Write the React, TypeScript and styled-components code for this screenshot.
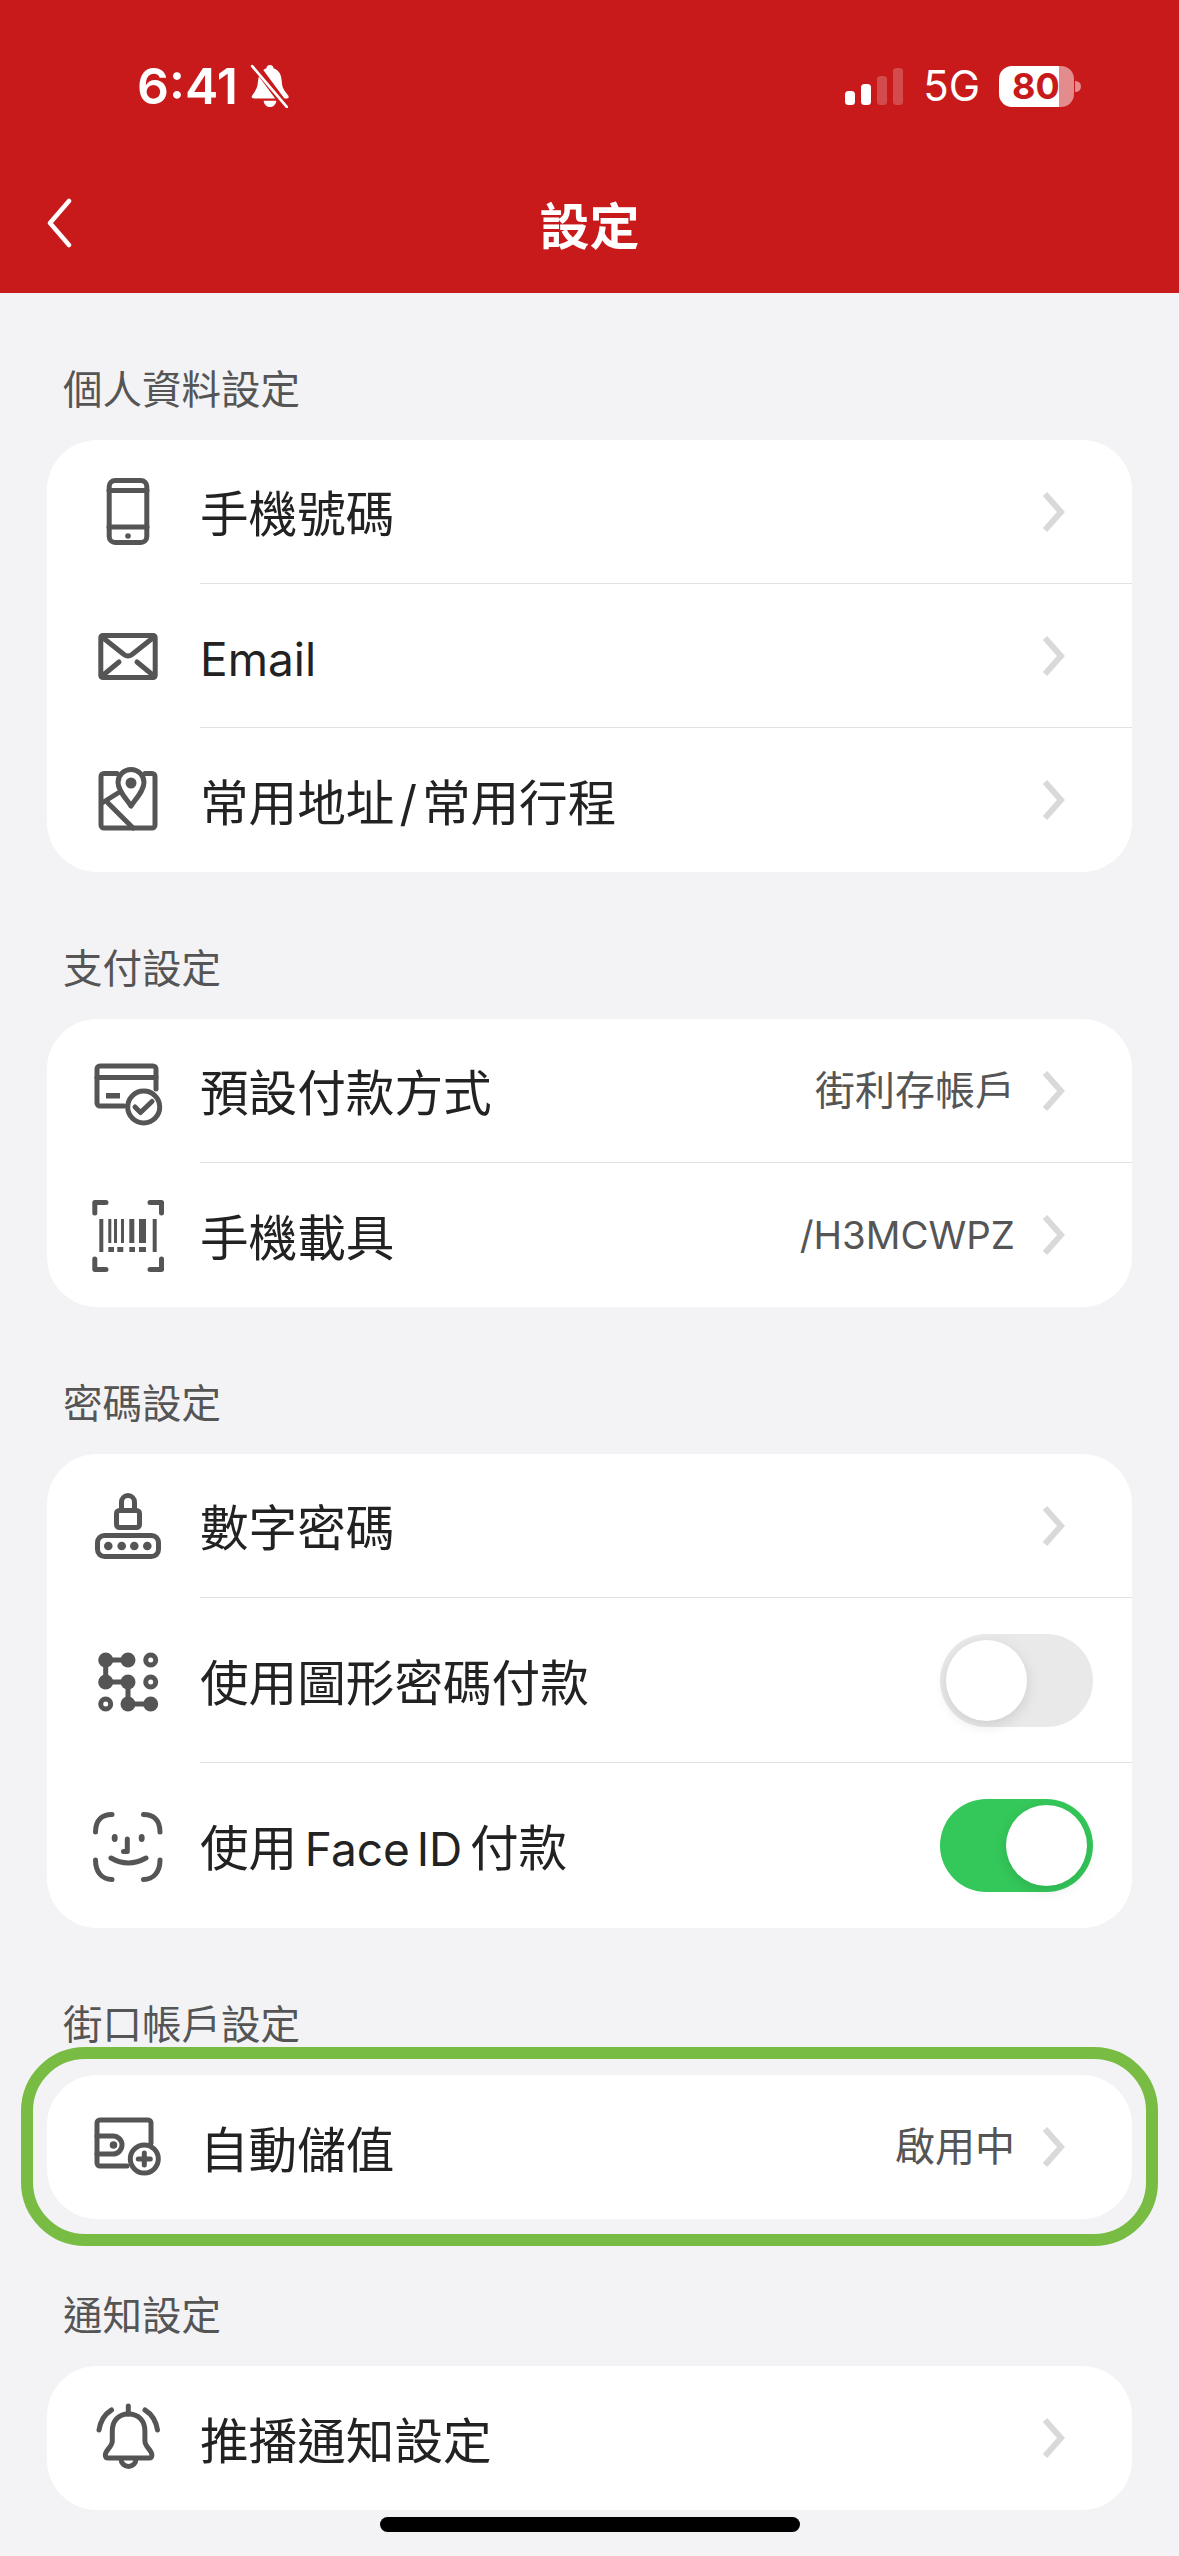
import React from 'react';
import styled, { createGlobalStyle } from 'styled-components';

const GlobalStyle = createGlobalStyle`
  html, body { margin: 0; padding: 0; background: #f3f3f6; }
  * { box-sizing: border-box; }
  body { font-family: Inter, "Noto Sans CJK TC", "Noto Sans", sans-serif; }
`;

const Page = styled.div`
  width: 1179px;
  min-height: 2556px;
  background: #f3f3f6;
  display: flex;
  flex-direction: column;
`;

const Header = styled.header`
  height: 293px;
  background: #c8191b;
  color: #fff;
  display: flex;
  flex-direction: column;
`;

const StatusBar = styled.div`
  height: 172px;
  padding: 0 98px 0 137px;
  display: flex;
  align-items: center;
  justify-content: space-between;
`;

const StatusLeft = styled.div`
  display: flex;
  align-items: center;
  gap: 12px;
`;

const Time = styled.span`
  font-family: Inter, sans-serif;
  font-size: 50px;
  font-weight: 600;
  line-height: 60px;
`;

const StatusRight = styled.div`
  display: flex;
  align-items: center;
`;

const Network = styled.span`
  font-family: Inter, sans-serif;
  font-size: 42px;
  font-weight: 400;
  line-height: 48px;
  margin: 0 19px 0 20px;
`;

const Battery = styled.div`
  width: 75px;
  height: 41px;
  border-radius: 13px;
  background: linear-gradient(90deg, #fff 0 80%, rgba(255, 255, 255, 0.5) 80% 100%);
  color: #c8191b;
  font-family: Inter, sans-serif;
  font-size: 36px;
  font-weight: 700;
  line-height: 41px;
  padding-left: 13px;
`;

const BatteryTip = styled.div`
  width: 6px;
  height: 11px;
  margin-left: 1px;
  border-radius: 0 6px 6px 0;
  background: rgba(255, 255, 255, 0.5);
`;

const NavBar = styled.nav`
  height: 108px;
  padding: 0 46px;
  display: grid;
  grid-template-columns: 1fr auto 1fr;
  align-items: center;
`;

const BackIcon = styled.svg`
  width: 26px;
  height: 50px;
  margin-top: -6px;
  display: block;
`;

const Title = styled.h1`
  margin: -7px 0 0;
  font-size: 50px;
  font-weight: 700;
  line-height: 60px;
  font-family: "Noto Sans CJK TC", sans-serif;
`;

const Main = styled.main`
  padding: 0 47px;
  display: flex;
  flex-direction: column;
`;

const Section = styled.section`
  padding-top: 69px;
`;

const SectionLabel = styled.h2`
  margin: 0 0 24px -1px;
  padding: 2px 0 0 17px;
  font-size: 39.5px;
  font-weight: 400;
  line-height: 52px;
  color: #555;
`;

const Highlight = styled.div`
  margin: -28px -26px -27px;
  padding: 16px 14px 15px;
  border: 12px solid #78bc43;
  border-radius: 64px;
`;

const Card = styled.div`
  background: #fff;
  border-radius: 50px;
  overflow: hidden;
`;

const Row = styled.div<{ $h: number }>`
  height: ${p => p.$h}px;
  padding-left: 41px;
  display: flex;
  align-items: stretch;
`;

const RowIcon = styled.svg`
  width: 80px;
  height: 80px;
  flex: none;
  align-self: center;
  margin-right: 32px;
  fill: none;
  stroke: #555;
  stroke-width: 5;
  stroke-linecap: round;
  stroke-linejoin: round;
`;

const RowBody = styled.div<{ $last?: boolean; $toggle?: boolean }>`
  flex: 1;
  min-width: 0;
  padding-right: ${p => (p.$toggle ? 39 : 67)}px;
  display: flex;
  align-items: center;
  border-bottom: ${p => (p.$last ? 'none' : '1px solid #e2e2e4')};
`;

const RowLabel = styled.span`
  flex: 1;
  margin-top: 7px;
  font-size: 48.6px;
  font-weight: 400;
  line-height: 60px;
  color: #222;
  word-spacing: -6px;
  white-space: nowrap;
`;

const Latin = styled.span<{ $size: number }>`
  font-size: ${p => p.$size}px;
`;

const Slash = styled.span`
  margin: 0 5px;
`;

const RowValue = styled.span`
  font-size: 40px;
  font-weight: 400;
  line-height: 50px;
  color: #555;
  margin-right: 26px;
`;

const Chevron = styled.svg`
  width: 24px;
  height: 42px;
  flex: none;
  fill: none;
  stroke: #d9d9d9;
  stroke-width: 6;
`;

const Toggle = styled.div<{ $on?: boolean }>`
  width: 153px;
  height: 93px;
  padding: 6px;
  border-radius: 47px;
  background: ${p => (p.$on ? '#34c85a' : '#e9e9ea')};
  display: flex;
  justify-content: ${p => (p.$on ? 'flex-end' : 'flex-start')};
`;

const Knob = styled.div`
  width: 81px;
  height: 81px;
  border-radius: 50%;
  background: #fff;
  box-shadow: 0 4px 14px rgba(0, 0, 0, 0.12);
`;

const HomeIndicator = styled.div`
  width: 420px;
  height: 15px;
  margin: 7px auto 24px;
  border-radius: 8px;
  background: #000;
`;

const Arrow = () => (
  <Chevron viewBox="0 0 24 42"><path d="M4 3 L20 21 L4 39" /></Chevron>
);

const MuteBell = () => (
  <svg width="41" height="44" viewBox="0 0 39 42">
    <path fill="#fff" d="M19 1c2 0 3 1 3.4 3 6 2 7.6 7 8 14 .3 5 2 7 6 12 1 2 .5 3-2 3H4c-2.500 0-3-1.500-2-3 3-4 5-7 5.400-12C8 11 10 6 15.600 4 16 2 17 1 19 1z" />
    <path fill="#fff" d="M13 35h12c0 3-2.500 6-6 6s-6-3-6-6z" />
    <path stroke="#c8191b" strokeWidth="7" d="M4 0 L35 42" />
    <path stroke="#fff" strokeWidth="2.600" strokeLinecap="round" d="M2 2 L35 41" />
  </svg>
);

const Signal = () => (
  <svg width="58" height="37" viewBox="0 0 58 37" fill="#fff">
    <rect x="0" y="23" width="10" height="14" rx="3.500" />
    <rect x="16" y="16" width="10" height="21" rx="3.500" />
    <rect x="32" y="8" width="10" height="29" rx="3.500" opacity="0.22" />
    <rect x="48" y="0" width="10" height="37" rx="3.500" opacity="0.22" />
  </svg>
);

const PhoneIcon = () => (
  <RowIcon viewBox="0 0 80 80">
    <rect x="21.200" y="8.500" width="37.600" height="62" rx="6" />
    <path d="M21 18.500H59M21 55H59" />
    <circle cx="40" cy="64" r="2.800" fill="#555" stroke="none" />
  </RowIcon>
);

const MailIcon = () => (
  <RowIcon viewBox="0 0 80 80">
    <rect x="12.800" y="19.500" width="54.400" height="42" rx="2" />
    <path d="M14 21 L36 38.500 q4 3 8 0 L66 21M14 60 L31 46M66 60 L49 46" />
  </RowIcon>
);

const MapIcon = () => (
  <RowIcon viewBox="0 0 80 80">
    <path d="M29 13.500H16a3 3 0 0 0-3 3V65a3 3 0 0 0 3 3H64a3 3 0 0 0 3-3V16.500a3 3 0 0 0-3-3H57" />
    <path d="M43 9.500a13 13 0 0 1 13 13c0 8-8 16-13 23.500c-5-7.500-13-15.500-13-23.500a13 13 0 0 1 13-13z" />
    <circle cx="43" cy="23" r="5.500" fill="#555" stroke="none" />
    <path d="M14 43 L30 33M20 43 L45 68" />
  </RowIcon>
);

const CardCheckIcon = () => (
  <RowIcon viewBox="0 0 80 80">
    <path d="M36 55H12a3 3 0 0 1-3-3V18a3 3 0 0 1 3-3H65a3 3 0 0 1 3 3V38" />
    <path d="M9 26.500H68" />
    <rect x="18" y="42" width="14" height="5.500" fill="#555" stroke="none" />
    <circle cx="55.700" cy="56" r="16" />
    <path d="M47 56 L52.500 61.500 L64 50.500" />
  </RowIcon>
);

const BarcodeIcon = () => (
  <RowIcon viewBox="0 0 80 80" strokeLinecap="butt">
    <path d="M18 7.500H6.800V18M62 7.500H73.500V18M18 74.500H6.800V64M62 74.500H73.500V64" />
    <g fill="#555" stroke="none">
      <rect x="11.300" y="24" width="4" height="33" />
      <rect x="20.300" y="24" width="3" height="24" />
      <rect x="26" y="24" width="3" height="24" />
      <rect x="33" y="24" width="3" height="24" />
      <rect x="41.300" y="24" width="5" height="24" />
      <rect x="51" y="24" width="7" height="24" />
      <rect x="64.700" y="24" width="4" height="33" />
      <rect x="20.300" y="52" width="5.700" height="5" />
      <rect x="29.300" y="52" width="6" height="5" />
      <rect x="41.300" y="52" width="5.700" height="5" />
      <rect x="51" y="52" width="7" height="5" />
    </g>
  </RowIcon>
);

const LockIcon = () => (
  <RowIcon viewBox="0 0 80 80">
    <rect x="9.500" y="49.500" width="61" height="21" rx="7" />
    <rect x="28.500" y="24.500" width="23" height="17" rx="3" />
    <path d="M33.500 24V16a6.500 6.500 0 0 1 13 0V24" />
    <g fill="#555" stroke="none">
      <circle cx="20.300" cy="60" r="4.300" />
      <circle cx="33.700" cy="60" r="4.300" />
      <circle cx="46.300" cy="60" r="4.300" />
      <circle cx="59.300" cy="60" r="4.300" />
    </g>
  </RowIcon>
);

const PatternIcon = () => (
  <RowIcon viewBox="0 0 80 80">
    <path d="M17.700 19H40M17.700 19V41H40V63H62.700" />
    <g fill="#555" stroke="none">
      <circle cx="17.700" cy="19" r="7.500" />
      <circle cx="40" cy="19" r="7.500" />
      <circle cx="17.700" cy="41" r="7.500" />
      <circle cx="40" cy="41" r="7.500" />
      <circle cx="40" cy="63" r="7.500" />
      <circle cx="62.700" cy="63" r="7.500" />
    </g>
    <circle cx="62.700" cy="19" r="5" />
    <circle cx="62.700" cy="41" r="5" />
    <circle cx="17.700" cy="63" r="5" />
  </RowIcon>
);

const FaceIcon = () => (
  <RowIcon viewBox="0 0 80 80">
    <path d="M7.500 26C7.500 14 14 8.500 24 8.500M72 26C72 14 65.500 8.500 55.500 8.500M7.500 54C7.500 66 14 73.500 24 73.500M72 54C72 66 65.500 73.500 55.500 73.500" />
    <ellipse cx="26.700" cy="32" rx="3" ry="4" fill="#555" stroke="none" />
    <ellipse cx="53.700" cy="32" rx="3" ry="4" fill="#555" stroke="none" />
    <path d="M39.300 33V45.500H35.500M23 52Q40 62 58 52" />
  </RowIcon>
);

const WalletIcon = () => (
  <RowIcon viewBox="0 0 80 80" strokeWidth="4.500">
    <path d="M39 59H12a3 3 0 0 1-3-3V16a3 3 0 0 1 3-3H60a3 3 0 0 1 3 3V36" />
    <path d="M9 29H25a9 9 0 0 1 0 18H9" />
    <circle cx="25.500" cy="38" r="3.800" fill="#555" stroke="none" />
    <circle cx="56.300" cy="52" r="14" />
    <path d="M50.300 52H62.300M56.300 46V58" />
  </RowIcon>
);

const BellIcon = () => (
  <RowIcon viewBox="0 0 80 80">
    <path d="M40.300 8V16" />
    <path d="M40.300 16c-10 0-16 7-16 17v10c0 6-7 9-7 14c0 2 1 3 3 3h40.600c2 0 3-1 3-3c0-5-7-8-7-14v-10c0-10-6-17-16.600-17z" />
    <path d="M33 61a7.500 7.500 0 0 0 15 0" />
    <path d="M11 32C12.500 23 17 16 23.500 12M69.500 32C68 23 63.500 16 57 12" />
  </RowIcon>
);

export default function App() {
  return (
    <Page>
      <GlobalStyle />
      <Header>
        <StatusBar>
          <StatusLeft>
            <Time>6:41</Time>
            <MuteBell />
          </StatusLeft>
          <StatusRight>
            <Signal />
            <Network>5G</Network>
            <Battery>80</Battery>
            <BatteryTip />
          </StatusRight>
        </StatusBar>
        <NavBar>
          <BackIcon viewBox="0 0 26 50" fill="none" stroke="#fff" strokeWidth="4.500" strokeLinecap="round" strokeLinejoin="round">
            <path d="M23 3 L4 25 L23 47" />
          </BackIcon>
          <Title>設定</Title>
        </NavBar>
      </Header>
      <Main>
        <Section>
          <SectionLabel>個人資料設定</SectionLabel>
          <Card>
            <Row $h={144}>
              <PhoneIcon />
              <RowBody><RowLabel>手機號碼</RowLabel><Arrow /></RowBody>
            </Row>
            <Row $h={144}>
              <MailIcon />
              <RowBody><RowLabel><Latin $size={46}>Email</Latin></RowLabel><Arrow /></RowBody>
            </Row>
            <Row $h={144}>
              <MapIcon />
              <RowBody $last><RowLabel>常用地址<Slash>/</Slash>常用行程</RowLabel><Arrow /></RowBody>
            </Row>
          </Card>
        </Section>
        <Section>
          <SectionLabel>支付設定</SectionLabel>
          <Card>
            <Row $h={144}>
              <CardCheckIcon />
              <RowBody><RowLabel>預設付款方式</RowLabel><RowValue>街利存帳戶</RowValue><Arrow /></RowBody>
            </Row>
            <Row $h={144}>
              <BarcodeIcon />
              <RowBody $last><RowLabel>手機載具</RowLabel><RowValue><Latin $size={38.4}>/H3MCWPZ</Latin></RowValue><Arrow /></RowBody>
            </Row>
          </Card>
        </Section>
        <Section>
          <SectionLabel>密碼設定</SectionLabel>
          <Card>
            <Row $h={144}>
              <LockIcon />
              <RowBody><RowLabel>數字密碼</RowLabel><Arrow /></RowBody>
            </Row>
            <Row $h={165}>
              <PatternIcon />
              <RowBody $toggle><RowLabel>使用圖形密碼付款</RowLabel><Toggle><Knob /></Toggle></RowBody>
            </Row>
            <Row $h={165}>
              <FaceIcon />
              <RowBody $last $toggle><RowLabel>使用 <Latin $size={46}>Face ID</Latin> 付款</RowLabel><Toggle $on><Knob /></Toggle></RowBody>
            </Row>
          </Card>
        </Section>
        <Section>
          <SectionLabel>街口帳戶設定</SectionLabel>
          <Highlight>
            <Card>
              <Row $h={144}>
                <WalletIcon />
                <RowBody $last><RowLabel>自動儲值</RowLabel><RowValue>啟用中</RowValue><Arrow /></RowBody>
              </Row>
            </Card>
          </Highlight>
        </Section>
        <Section>
          <SectionLabel>通知設定</SectionLabel>
          <Card>
            <Row $h={144}>
              <BellIcon />
              <RowBody $last><RowLabel>推播通知設定</RowLabel><Arrow /></RowBody>
            </Row>
          </Card>
        </Section>
      </Main>
      <HomeIndicator />
    </Page>
  );
}
